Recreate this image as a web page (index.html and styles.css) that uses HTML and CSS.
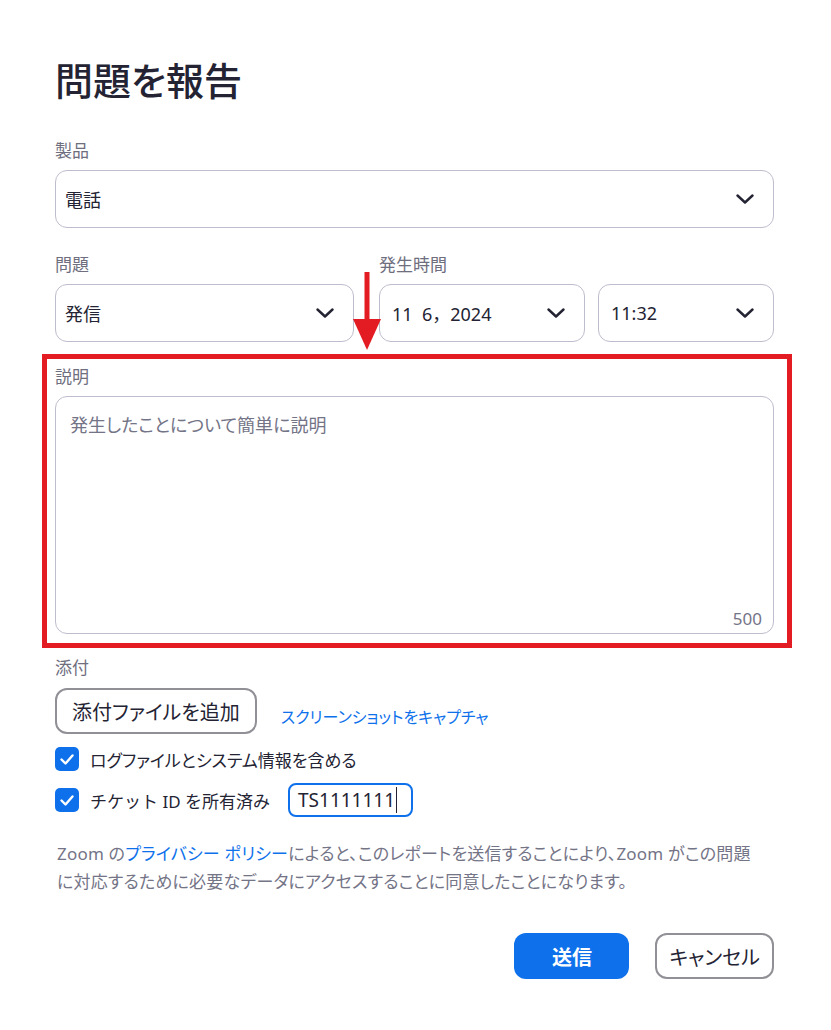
FILE: index.html
```html
<!DOCTYPE html>
<html lang="ja">
<head>
  <meta charset="UTF-8" />
  <title>問題を報告</title>
  <link rel="stylesheet" href="styles.css">
</head>
<body>
  <div class="dialog">
    <h1 class="title">問題を報告</h1>

    <div class="field">
      <div class="label">製品</div>
      <div class="select">
        <span>電話</span>
        <svg class="chev" viewBox="0 0 18 10"><path d="M1.5 1.5 L9 8.5 L16.5 1.5"/></svg>
      </div>
    </div>

    <div class="row">
      <div class="field issue">
        <div class="label">問題</div>
        <div class="select">
          <span>発信</span>
          <svg class="chev" viewBox="0 0 18 10"><path d="M1.5 1.5 L9 8.5 L16.5 1.5"/></svg>
        </div>
      </div>
      <div class="field when">
        <div class="label">発生時間</div>
        <div class="when-boxes">
          <div class="select date">
            <span>11&nbsp;&nbsp;6，2024</span>
            <svg class="chev" viewBox="0 0 18 10"><path d="M1.5 1.5 L9 8.5 L16.5 1.5"/></svg>
          </div>
          <div class="select time">
            <span>11:32</span>
            <svg class="chev" viewBox="0 0 18 10"><path d="M1.5 1.5 L9 8.5 L16.5 1.5"/></svg>
          </div>
        </div>
      </div>
      <svg class="arrow" viewBox="0 0 30 78">
        <rect x="12.5" y="0" width="5" height="50" />
        <polygon points="1,47 29,47 15,78" />
      </svg>
    </div>

    <div class="field desc">
      <div class="highlight"></div>
      <div class="label">説明</div>
      <div class="textarea">
        <span class="placeholder">発生したことについて簡単に説明</span>
        <span class="count">500</span>
      </div>
    </div>

    <div class="field">
      <div class="label">添付</div>
      <div class="attach">
        <button class="btn ghost">添付ファイルを追加</button>
        <a class="link" href="#">スクリーンショットをキャプチャ</a>
      </div>
    </div>

    <div class="check-row">
      <span class="checkbox"><svg viewBox="0 0 24 24"><path d="M6.5 12.5 L10.5 16.5 L17.5 8.5"/></svg></span>
      <span>ログファイルとシステム情報を含める</span>
    </div>
    <div class="check-row">
      <span class="checkbox"><svg viewBox="0 0 24 24"><path d="M6.5 12.5 L10.5 16.5 L17.5 8.5"/></svg></span>
      <span class="ticket-label">チケット ID を所有済み</span>
      <div class="ticket">TS1111111<span class="caret"></span></div>
    </div>

    <p class="note">Zoom の<a href="#">プライバシー ポリシー</a>によると、このレポートを送信することにより、Zoom がこの問題<br>に対応するために必要なデータにアクセスすることに同意したことになります。</p>

    <div class="actions">
      <button class="btn primary">送信</button>
      <button class="btn ghost cancel">キャンセル</button>
    </div>
  </div>
</body>
</html>
```

FILE: styles.css
```css
* {
  box-sizing: border-box;
}

body {
  margin: 0;
  background: #ffffff;
  color: #232333;
  font-family: "Noto Sans", "Noto Sans CJK JP", sans-serif;
  font-feature-settings: "palt";
}

.dialog {
  width: 831px;
  padding: 58px 57px 40px 55px;
}

.title {
  margin: 0;
  font-size: 38px;
  line-height: 44px;
  font-weight: 500;
  color: #232333;
}

.field {
  margin-top: 25px;
}

.title + .field {
  margin-top: 37px;
}

.label {
  font-size: 17px;
  line-height: 24px;
  color: #6e6e7e;
  margin-bottom: 7px;
}

.select {
  height: 58px;
  border: 1.5px solid #bebdcd;
  border-radius: 12px;
  display: flex;
  align-items: center;
  justify-content: space-between;
  padding: 0 19px 0 9px;
  font-size: 18px;
  color: #232333;
}

.chev {
  width: 18px;
  height: 10px;
  fill: none;
  stroke: #232333;
  stroke-width: 2.4;
  stroke-linecap: round;
  stroke-linejoin: round;
}

.row {
  display: flex;
  position: relative;
}

.issue {
  width: 299px;
}

.when {
  margin-left: 25px;
  flex: 1;
}

.when-boxes {
  display: flex;
  gap: 13px;
}

.date {
  width: 206px;
  padding-left: 12px;
  font-feature-settings: normal;
}

.time {
  flex: 1;
  padding-left: 12px;
}

.arrow {
  position: absolute;
  left: 297px;
  top: 44px;
  width: 30px;
  height: 78px;
  fill: #e31c23;
}

.desc {
  margin-top: 23px;
  position: relative;
}

.highlight {
  position: absolute;
  left: -13px;
  right: -18px;
  top: -11px;
  bottom: -14px;
  border: 5px solid #e31c23;
  pointer-events: none;
}

.textarea {
  height: 238px;
  border: 1.5px solid #bebdcd;
  border-radius: 12px;
  position: relative;
  padding: 16px 14px;
}

.placeholder {
  font-size: 18px;
  line-height: 24px;
  color: #747487;
}

.count {
  position: absolute;
  right: 11px;
  bottom: 3px;
  font-size: 17px;
  color: #747487;
}

.desc + .field {
  margin-top: 22px;
}

.desc + .field .label {
  margin-bottom: 8px;
}

.attach {
  display: flex;
  align-items: flex-end;
  gap: 24px;
}

.btn {
  font-family: "Noto Sans", "Noto Sans CJK JP", sans-serif;
  font-feature-settings: "palt";
  font-size: 20px;
  height: 46px;
  border-radius: 12px;
  cursor: pointer;
}

.ghost {
  background: #ffffff;
  border: 2px solid #909096;
  color: #232333;
  padding: 0 15px;
}

.cancel {
  padding: 0 12px;
}

.primary {
  background: #0e71eb;
  border: none;
  color: #ffffff;
  font-weight: 700;
  width: 115px;
}

.link {
  color: #0e71eb;
  text-decoration: none;
  font-size: 16px;
  line-height: 24px;
  margin-bottom: 5px;
}

.check-row {
  display: flex;
  align-items: center;
  height: 34px;
  font-size: 17px;
  color: #232333;
  margin-top: 8px;
}

.check-row + .check-row {
  margin-top: 7px;
}

.checkbox {
  width: 24px;
  height: 24px;
  border-radius: 5px;
  background: #0e71eb;
  margin-right: 11px;
  display: flex;
}

.checkbox svg {
  width: 24px;
  height: 24px;
  fill: none;
  stroke: #ffffff;
  stroke-width: 2.4;
  stroke-linecap: round;
  stroke-linejoin: round;
}

.ticket-label {
  font-feature-settings: normal;
}

.ticket {
  margin-left: 18px;
  width: 125px;
  height: 34px;
  border: 2px solid #0e71eb;
  border-radius: 8px;
  display: flex;
  align-items: center;
  padding-left: 8px;
  font-size: 19px;
  color: #232333;
}

.caret {
  display: inline-block;
  width: 1px;
  height: 26px;
  background: #232333;
  margin-left: 1px;
}

.note {
  margin: 23px 0 0 2px;
  font-size: 17px;
  line-height: 28px;
  color: #747487;
  letter-spacing: 0.2px;
}

.note a {
  color: #0e71eb;
  text-decoration: none;
}

.actions {
  display: flex;
  justify-content: flex-end;
  gap: 26px;
  margin-top: 37px;
}
```
